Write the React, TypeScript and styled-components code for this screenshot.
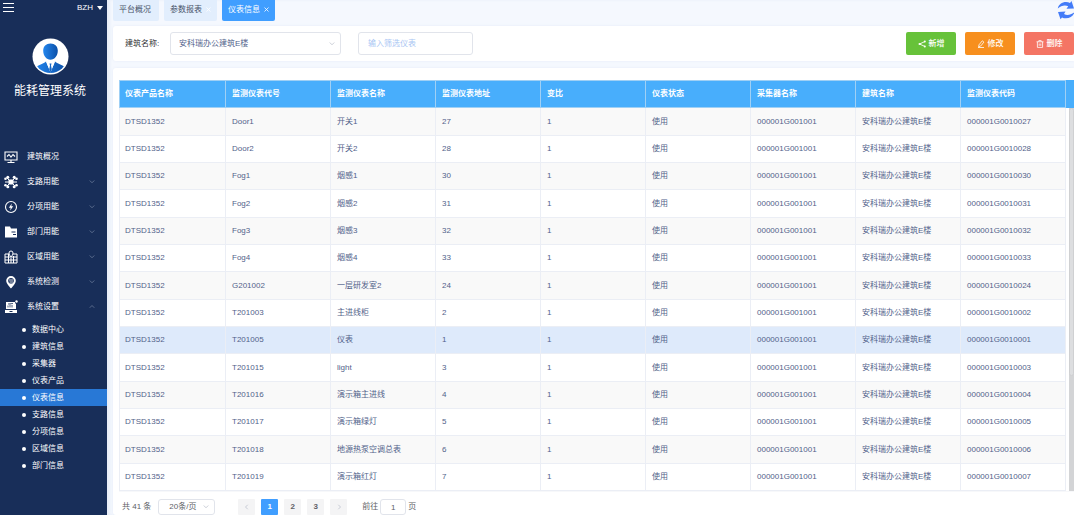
import React from "react";
import styled, { createGlobalStyle, css } from "styled-components";

const GlobalStyle = createGlobalStyle`
  *, *::before, *::after { box-sizing: border-box; }
  html, body, #root { height: 100%; }
  body {
    margin: 0;
    background: #f5f8fe;
    color: #52628a;
    font-family: "Liberation Sans", "Noto Sans CJK SC", sans-serif;
    font-size: 8px;
    line-height: 12px;
    overflow: hidden;
  }
  button, input, select { font: inherit; color: inherit; margin: 0; }
  button { cursor: pointer; border: 0; padding: 0; background: none; }
  a { color: inherit; text-decoration: none; }
  ul { list-style: none; margin: 0; padding: 0; }
`;

const Shell = styled.div`
  display: flex;
  height: 100vh;
`;

const Sidebar = styled.aside`
  flex: 0 0 107px;
  background: #182e59;
  color: #fff;
`;

const SideTop = styled.div`
  display: flex;
  justify-content: space-between;
  align-items: flex-start;
  height: 38px;
  padding: 2px 4px 0 3px;
`;

const UserButton = styled.button`
  display: flex;
  align-items: center;
  gap: 4px;
  height: 12px;
`;

const Brand = styled.div`
  display: flex;
  flex-direction: column;
  align-items: center;
  gap: 7px;
  height: 106px;
  padding-right: 7px;
`;

const BrandName = styled.h1`
  margin: 0;
  font-size: 12px;
  line-height: 18px;
  font-weight: 400;
`;

const NavLink = styled.a`
  display: grid;
  grid-template-columns: 14px 1fr 6px;
  column-gap: 9px;
  align-items: center;
  height: 25px;
  padding: 0 12px 0 4px;
`;

const SubMenu = styled.ul`
  padding-top: 2px;
`;

const SubLink = styled.a<{ $active?: boolean }>`
  display: flex;
  align-items: center;
  gap: 6px;
  height: 17px;
  padding-left: 22px;
  background: ${(p) => (p.$active ? "#2878d6" : "transparent")};
  &::before {
    content: "";
    width: 4px;
    height: 4px;
    border-radius: 50%;
    background: currentColor;
  }
`;

const Main = styled.main`
  flex: 1;
  min-width: 0;
  display: flex;
  flex-direction: column;
  padding-left: 6px;
  box-shadow: inset 3px 0 3px #e9eef8;
`;

const TabBar = styled.nav`
  display: flex;
  gap: 5px;
  height: 26px;
`;

const Tab = styled.a<{ $active?: boolean }>`
  display: flex;
  align-items: center;
  gap: 4px;
  min-width: 46px;
  height: 21px;
  padding: 0 6px 2px;
  border-radius: 0 0 2px 2px;
  background: ${(p) => (p.$active ? "#409eff" : "#e2eefd")};
  color: ${(p) => (p.$active ? "#fff" : "#495469")};
`;

const RefreshButton = styled.button`
  margin-left: auto;
  width: 17px;
  height: 20px;
`;

const panel = css`
  background: #fff;
  border-radius: 3px 0 0 3px;
  box-shadow: 0 0 3px #e6ecf8;
`;

const FilterBar = styled.form`
  ${panel}
  display: flex;
  align-items: center;
  height: 35px;
  padding-left: 12px;
`;

const FieldLabel = styled.label`
  width: 45px;
  color: #303133;
`;

const SelectWrap = styled.span<{ $width: number }>`
  display: grid;
  align-items: center;
  width: ${(p) => p.$width}px;
  > * { grid-area: 1 / 1; }
  > svg { justify-self: end; margin-right: 6px; pointer-events: none; }
`;

const fieldBox = css`
  border: 1px solid #e1e4eb;
  border-radius: 3px;
  background: #fff;
  outline: 0;
`;

const Select = styled.select<{ $small?: boolean }>`
  ${fieldBox}
  appearance: none;
  width: 100%;
  height: ${(p) => (p.$small ? 16 : 23)}px;
  padding: 0 ${(p) => (p.$small ? 10 : 8)}px;
`;

const FilterInput = styled.input`
  ${fieldBox}
  width: 115px;
  height: 23px;
  margin-left: 17px;
  padding: 0 9px;
  &::placeholder { color: #a9c6f3; }
`;

const Actions = styled.div`
  display: flex;
  gap: 9px;
  margin-left: auto;
`;

const ActionButton = styled.button<{ $color: string }>`
  display: flex;
  align-items: center;
  justify-content: center;
  gap: 3px;
  width: 50px;
  height: 23px;
  border-radius: 2px;
  background: ${(p) => p.$color};
  color: #fff;
  font-weight: 500;
`;

const TablePanel = styled.section`
  ${panel}
  flex: 1;
  margin-top: 7px;
  padding: 12px 0 0 6px;
`;

const HeadStrip = styled.div`
  padding-right: 8px;
  background: #48aefc;
`;

const Grid = styled.table`
  width: 100%;
  table-layout: fixed;
  border-collapse: separate;
  border-spacing: 0;
  th, td {
    padding: 0 6px;
    text-align: left;
    white-space: nowrap;
    overflow: hidden;
  }
  th {
    height: 28px;
    color: #fff;
    border: solid #9fd0f5;
    border-width: 1px 1px 1px 0;
  }
  td {
    height: 27px;
    border: solid #ebeef5;
    border-width: 0 1px 1px 0;
  }
  th:first-child, td:first-child { border-left-width: 1px; padding-left: 5px; }
`;

const Row = styled.tr<{ $current?: boolean }>`
  background: #fff;
  &:nth-child(odd) { background: #f9f9f9; }
  &:nth-child(3n + 1) td { height: 28px; }
  ${(p) => p.$current && css`&&& { background: #deeafb; }`}
`;

const BodyArea = styled.div`
  display: flex;
  justify-content: space-between;
  border-bottom: 1px solid #f7f8fa;
`;

const BodyTable = styled.div`
  flex: 1;
  margin-right: 3px;
`;

const ScrollTrack = styled.div`
  width: 5px;
  background: #d3d4d6;
`;

const ScrollThumb = styled.div`
  height: 70%;
  border-radius: 3px;
  background: #dddee0;
  border: 1px solid #cfd0d2;
`;

const Pager = styled.nav`
  display: flex;
  align-items: center;
  gap: 7px;
  padding: 7px 0 0 3px;
  color: #606266;
`;

const PageButtons = styled.div`
  display: flex;
  gap: 6px;
  margin: 0 8px 0 16px;
`;

const PageButton = styled.button<{ $active?: boolean }>`
  display: flex;
  align-items: center;
  justify-content: center;
  width: 17px;
  height: 16px;
  border-radius: 1px;
  font-weight: 700;
  background: ${(p) => (p.$active ? "#409eff" : "#f4f4f5")};
  color: ${(p) => (p.$active ? "#fff" : "#606266")};
  &:disabled { color: #c0c4cc; }
`;

const JumpLabel = styled.label`
  display: flex;
  align-items: center;
  gap: 2px;
`;

const JumpInput = styled.input`
  ${fieldBox}
  width: 26px;
  height: 16px;
  padding: 0;
  text-align: center;
`;

type Direction = "down" | "up" | "left" | "right";
const chevronPath: Record<Direction, string> = {
  down: "M1 2l3 3 3-3",
  up: "M1 5l3-3 3 3",
  left: "M5 1L2 4l3 3",
  right: "M3 1l3 3-3 3",
};

const Chevron = ({ to = "down", color = "#b8bec9" }: { to?: Direction; color?: string }) => (
  <svg width="6" height="6" viewBox="0 0 8 8" fill="none" stroke={color} strokeWidth="1">
    <path d={chevronPath[to]} />
  </svg>
);

const Cross = ({ color }: { color: string }) => (
  <svg width="5" height="5" viewBox="0 0 5 5" stroke={color} strokeWidth="0.8">
    <path d="M.5.5l4 4M4.5.5l-4 4" />
  </svg>
);

const Avatar = () => (
  <svg width="37" height="37" viewBox="0 0 37 37">
    <defs>
      <linearGradient id="person" x1="0" x2="1">
        <stop offset="0" stopColor="#2386ee" />
        <stop offset="1" stopColor="#0b50a8" />
      </linearGradient>
      <clipPath id="disc"><circle cx="18.500" cy="18.500" r="16.500" /></clipPath>
    </defs>
    <circle cx="18.500" cy="18.500" r="18" fill="#fff" />
    <g clipPath="url(#disc)">
      <path fill="url(#person)" d="M18.500 5.500c4.500 0 7.300 3 7.300 7.300 0 4.800-3.200 9-7.300 9s-7.300-4.200-7.300-9c0-4.300 2.800-7.300 7.300-7.300z" />
      <path fill="url(#person)" d="M3 30c2-2.500 8-4 11-6.500l4.500 11 4.500-11C26 26 32 27.500 34 30v7H3z" />
    </g>
    <path d="M14 23.500l3 7 1.500 4 1.500-4 3-7-3.500 2.500h-2z" fill="#fff" />
    <path d="M17.500 25.500h2l-.5 2 .8 4-1.300 3-1.300-3 .8-4z" fill="#1565c4" />
  </svg>
);

const navIcons: Record<string, React.ReactNode> = {
  monitor: (
    <g fill="none" stroke="#fff" strokeWidth="1.100">
      <path d="M1 2h12v8H1zM7 10v2M3.500 12.500h7M3 6.500l2-2 2 2.500 2-2.500 2 2" />
    </g>
  ),
  network: (
    <g fill="#fff" stroke="#fff">
      <path d="M3 3l3 3M11 3L8 6M3 11l3-3M11 11L8 8M1 7h12" strokeWidth="1" />
      <rect x="4.500" y="4.500" width="5" height="5" rx="1" stroke="none" />
      <g stroke="none">
        <circle cx="3.800" cy="2.300" r="1.500" /><circle cx="10.200" cy="2.300" r="1.500" />
        <circle cx="3.800" cy="11.700" r="1.500" /><circle cx="10.200" cy="11.700" r="1.500" />
        <circle cx="1.500" cy="3.800" r="1.300" /><circle cx="12.500" cy="3.800" r="1.300" />
        <circle cx="1.500" cy="10.200" r="1.300" /><circle cx="12.500" cy="10.200" r="1.300" />
      </g>
    </g>
  ),
  energy: (
    <g>
      <circle cx="7" cy="7" r="5.500" fill="none" stroke="#fff" strokeWidth="1.100" />
      <path d="M7.800 3.500L4.800 7.700h1.900l-.5 2.800 3-4.200H7.300z" fill="#fff" />
    </g>
  ),
  folder: (
    <g>
      <path d="M1 1.500h5l1 2h6v9H1z" fill="#fff" />
      <path d="M7.500 7h4M9 9.500h3" stroke="#182e59" strokeWidth="1" />
    </g>
  ),
  region: (
    <g fill="none" stroke="#fff" strokeWidth="1">
      <path d="M5 4H1v9h12V4H9M1 7h12M1 10h12M4.500 4v9M9.500 6v7M7 8v5" />
      <path d="M7 7C5.800 5.500 5 4.500 5 3a2 2 0 014 0c0 1.500-.8 2.500-2 4z" fill="#182e59" />
    </g>
  ),
  pin: (
    <g>
      <path d="M7 1a4.800 4.800 0 00-4.800 4.800C2.200 9 7 13.500 7 13.500s4.800-4.500 4.800-7.700A4.800 4.800 0 007 1z" fill="#fff" />
      <circle cx="7" cy="5.800" r="2.800" fill="#182e59" />
      <path d="M5 5h4M5.500 7H9" stroke="#fff" strokeWidth=".8" />
    </g>
  ),
  settings: (
    <g>
      <path d="M2 2h9v1.500h1V9H2z" fill="#fff" />
      <path d="M1 10h12v3H1z" fill="#fff" />
      <path d="M4 7.500v-2M6 7.500v-3M8 7.500V5M4 4l5-.5" stroke="#182e59" strokeWidth=".8" />
      <path d="M5.500 11.500h3" stroke="#182e59" strokeWidth="1" />
      <circle cx="12.500" cy="1.500" r="1.200" fill="#fff" />
    </g>
  ),
};

const NavIcon = ({ name }: { name: string }) => (
  <svg width="14" height="14" viewBox="0 0 14 14">{navIcons[name]}</svg>
);

const RefreshIcon = () => (
  <svg width="17" height="20" viewBox="0 0 17 20" fill="#447cf8">
    <path d="M.8 8.500C1.500 4.500 5 2 9 2c1.600 0 2.800.3 4 .9L14.500 1 17 8.500l-7.500.3 1.700-2.600C8 4.600 4 5.500.8 8.500z" />
    <path d="M17.500 12c-1 4-4.500 6.300-8.500 6.300-1.600 0-2.800-.3-4-.9L3.500 19.300 1 12l7.500-.5L7 14c3 1.700 7 1 10.500-2z" />
  </svg>
);

const actionIcons: Record<string, React.ReactNode> = {
  share: (
    <g fill="#fff" stroke="#fff">
      <path d="M7 1.500L1.500 4 7 6.500" fill="none" strokeWidth=".9" />
      <circle cx="1.500" cy="4" r="1" stroke="none" /><circle cx="6.800" cy="1.500" r="1" stroke="none" /><circle cx="6.800" cy="6.500" r="1" stroke="none" />
    </g>
  ),
  edit: (
    <path d="M2 4.800L5.300.8l1.600 1.300-3.300 4-2 .7zM1 7.500h6" fill="none" stroke="#fff" strokeWidth=".8" />
  ),
  trash: (
    <path d="M.5 1.800h7M2.800 1.800V.6h2.400v1.200M1.400 1.800v5.600h5.200V1.800M3.200 3.500v2.300M4.800 3.500v2.300" fill="none" stroke="#fff" strokeWidth=".8" />
  ),
};

const ActionIcon = ({ name }: { name: string }) => (
  <svg width="8" height="8" viewBox="0 0 8 8">{actionIcons[name]}</svg>
);

const navItems = [
  { label: "建筑概况", icon: "monitor" },
  { label: "支路用能", icon: "network", arrow: "down" },
  { label: "分项用能", icon: "energy", arrow: "down" },
  { label: "部门用能", icon: "folder", arrow: "down" },
  { label: "区域用能", icon: "region", arrow: "down" },
  { label: "系统检测", icon: "pin", arrow: "down" },
  { label: "系统设置", icon: "settings", arrow: "up" },
] as { label: string; icon: string; arrow?: Direction }[];

const subItems = ["数据中心", "建筑信息", "采集器", "仪表产品", "仪表信息", "支路信息", "分项信息", "区域信息", "部门信息"];

const columns = ["仪表产品名称", "监测仪表代号", "监测仪表名称", "监测仪表地址", "变比", "仪表状态", "采集器名称", "建筑名称", "监测仪表代码"];

const meters = [
  ["Door1", "开关1", "27"],
  ["Door2", "开关2", "28"],
  ["Fog1", "烟感1", "30"],
  ["Fog2", "烟感2", "31"],
  ["Fog3", "烟感3", "32"],
  ["Fog4", "烟感4", "33"],
  ["G201002", "一层研发室2", "24"],
  ["T201003", "主进线柜", "2"],
  ["T201005", "仪表", "1"],
  ["T201015", "light", "3"],
  ["T201016", "演示箱主进线", "4"],
  ["T201017", "演示箱绿灯", "5"],
  ["T201018", "地源热泵空调总表", "6"],
  ["T201019", "演示箱红灯", "7"],
];

const ColumnWidths = () => (
  <colgroup>
    <col width="107" />
    {columns.slice(1).map((c) => <col key={c} />)}
  </colgroup>
);

export default function App() {
  return (
    <Shell>
      <GlobalStyle />
      <Sidebar>
        <SideTop>
          <button type="button" aria-label="菜单">
            <svg width="11" height="12" viewBox="0 0 11 12" stroke="#fff" strokeWidth="1">
              <path d="M0 1.500h11M0 5.500h11M0 9.500h11" />
            </svg>
          </button>
          <UserButton type="button">
            BZH
            <svg width="6" height="4" viewBox="0 0 6 4" fill="#fff"><path d="M0 0h6L3 4z" /></svg>
          </UserButton>
        </SideTop>
        <Brand>
          <Avatar />
          <BrandName>能耗管理系统</BrandName>
        </Brand>
        <nav>
          {navItems.map((item) => (
            <NavLink href="#" key={item.label}>
              <NavIcon name={item.icon} />
              <span>{item.label}</span>
              {item.arrow && <Chevron to={item.arrow} color="#71809f" />}
            </NavLink>
          ))}
          <SubMenu>
            {subItems.map((label) => (
              <li key={label}>
                <SubLink href="#" $active={label === "仪表信息"}>{label}</SubLink>
              </li>
            ))}
          </SubMenu>
        </nav>
      </Sidebar>
      <Main>
        <TabBar>
          <Tab href="#">平台概况</Tab>
          <Tab href="#">参数报表 <Cross color="#fff" /></Tab>
          <Tab href="#" $active>仪表信息 <Cross color="#fff" /></Tab>
          <RefreshButton type="button" aria-label="刷新"><RefreshIcon /></RefreshButton>
        </TabBar>
        <FilterBar>
          <FieldLabel htmlFor="building">建筑名称:</FieldLabel>
          <SelectWrap $width={171}>
            <Select id="building"><option>安科瑞办公建筑E楼</option></Select>
            <Chevron />
          </SelectWrap>
          <FilterInput aria-label="输入筛选仪表" placeholder="输入筛选仪表" />
          <Actions>
            <ActionButton type="button" $color="#67c23a"><ActionIcon name="share" />新增</ActionButton>
            <ActionButton type="button" $color="#f78f1e"><ActionIcon name="edit" />修改</ActionButton>
            <ActionButton type="button" $color="#f47564"><ActionIcon name="trash" />删除</ActionButton>
          </Actions>
        </FilterBar>
        <TablePanel>
          <HeadStrip>
            <Grid>
              <ColumnWidths />
              <thead>
                <tr>{columns.map((c) => <th key={c} scope="col">{c}</th>)}</tr>
              </thead>
            </Grid>
          </HeadStrip>
          <BodyArea>
            <BodyTable>
              <Grid>
                <ColumnWidths />
                <tbody>
                  {meters.map(([code, name, address]) => (
                    <Row key={code} $current={code === "T201005"}>
                      <td>DTSD1352</td>
                      <td>{code}</td>
                      <td>{name}</td>
                      <td>{address}</td>
                      <td>1</td>
                      <td>使用</td>
                      <td>000001G001001</td>
                      <td>安科瑞办公建筑E楼</td>
                      <td>000001G00100{address.padStart(2, "0")}</td>
                    </Row>
                  ))}
                </tbody>
              </Grid>
            </BodyTable>
            <ScrollTrack><ScrollThumb /></ScrollTrack>
          </BodyArea>
          <Pager aria-label="分页">
            <span>共 41 条</span>
            <SelectWrap $width={57}>
              <Select $small aria-label="每页条数"><option>20条/页</option></Select>
              <Chevron />
            </SelectWrap>
            <PageButtons>
              <PageButton type="button" disabled aria-label="上一页"><Chevron to="left" /></PageButton>
              <PageButton type="button" $active>1</PageButton>
              <PageButton type="button">2</PageButton>
              <PageButton type="button">3</PageButton>
              <PageButton type="button" aria-label="下一页"><Chevron to="right" /></PageButton>
            </PageButtons>
            <JumpLabel>前往 <JumpInput defaultValue="1" /> 页</JumpLabel>
          </Pager>
        </TablePanel>
      </Main>
    </Shell>
  );
}
